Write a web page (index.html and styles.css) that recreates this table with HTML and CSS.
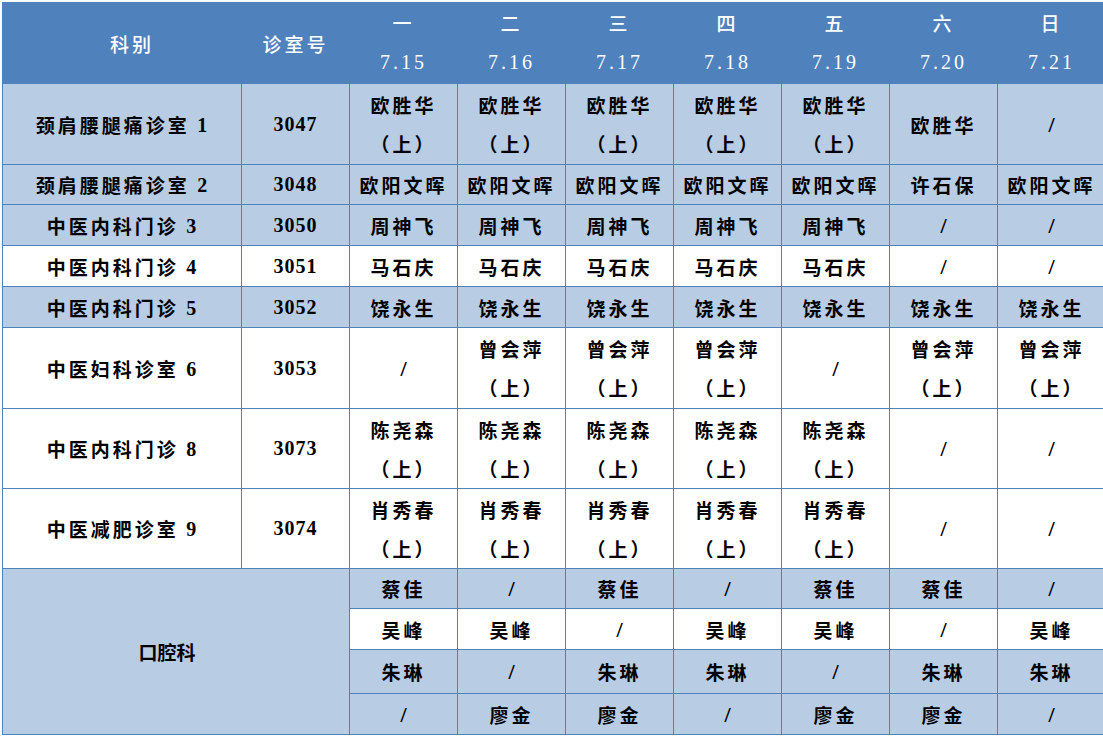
FILE: index.html
```html
<!DOCTYPE html>
<html lang="zh-CN">
<head>
<meta charset="utf-8">
<title>排班表</title>
<link rel="stylesheet" href="styles.css">
</head>
<body>
<table class="sched">
  <colgroup>
    <col class="c-dept"><col class="c-room">
    <col class="c-day"><col class="c-day"><col class="c-day"><col class="c-day"><col class="c-day"><col class="c-day"><col class="c-day">
  </colgroup>
  <thead>
    <tr class="h1">
      <th rowspan="2" class="dept-h">科别</th>
      <th rowspan="2">诊室号</th>
      <th>一</th><th>二</th><th>三</th><th>四</th><th>五</th><th>六</th><th>日</th>
    </tr>
    <tr class="h2">
      <th class="date">7.15</th><th class="date">7.16</th><th class="date">7.17</th><th class="date">7.18</th><th class="date">7.19</th><th class="date">7.20</th><th class="date">7.21</th>
    </tr>
  </thead>
  <tbody>
    <tr class="lt tall">
      <td>颈肩腰腿痛诊室 <span class="num">1</span></td><td class="num">3047</td>
      <td>欧胜华<br>（上）</td><td>欧胜华<br>（上）</td><td>欧胜华<br>（上）</td><td>欧胜华<br>（上）</td><td>欧胜华<br>（上）</td><td>欧胜华</td><td class="sl">/</td>
    </tr>
    <tr class="lt short">
      <td>颈肩腰腿痛诊室 <span class="num">2</span></td><td class="num">3048</td>
      <td>欧阳文晖</td><td>欧阳文晖</td><td>欧阳文晖</td><td>欧阳文晖</td><td>欧阳文晖</td><td>许石保</td><td>欧阳文晖</td>
    </tr>
    <tr class="lt">
      <td>中医内科门诊 <span class="num">3</span></td><td class="num">3050</td>
      <td>周神飞</td><td>周神飞</td><td>周神飞</td><td>周神飞</td><td>周神飞</td><td class="sl">/</td><td class="sl">/</td>
    </tr>
    <tr class="wh">
      <td>中医内科门诊 <span class="num">4</span></td><td class="num">3051</td>
      <td>马石庆</td><td>马石庆</td><td>马石庆</td><td>马石庆</td><td>马石庆</td><td class="sl">/</td><td class="sl">/</td>
    </tr>
    <tr class="lt">
      <td>中医内科门诊 <span class="num">5</span></td><td class="num">3052</td>
      <td>饶永生</td><td>饶永生</td><td>饶永生</td><td>饶永生</td><td>饶永生</td><td>饶永生</td><td>饶永生</td>
    </tr>
    <tr class="wh tall">
      <td>中医妇科诊室 <span class="num">6</span></td><td class="num">3053</td>
      <td class="sl">/</td><td>曾会萍<br>（上）</td><td>曾会萍<br>（上）</td><td>曾会萍<br>（上）</td><td class="sl">/</td><td>曾会萍<br>（上）</td><td>曾会萍<br>（上）</td>
    </tr>
    <tr class="wh tall2">
      <td>中医内科门诊 <span class="num">8</span></td><td class="num">3073</td>
      <td>陈尧森<br>（上）</td><td>陈尧森<br>（上）</td><td>陈尧森<br>（上）</td><td>陈尧森<br>（上）</td><td>陈尧森<br>（上）</td><td class="sl">/</td><td class="sl">/</td>
    </tr>
    <tr class="wh tall2">
      <td>中医减肥诊室 <span class="num">9</span></td><td class="num">3074</td>
      <td>肖秀春<br>（上）</td><td>肖秀春<br>（上）</td><td>肖秀春<br>（上）</td><td>肖秀春<br>（上）</td><td>肖秀春<br>（上）</td><td class="sl">/</td><td class="sl">/</td>
    </tr>
    <tr class="lt short">
      <td class="oral" rowspan="4" colspan="2">口腔科</td>
      <td>蔡佳</td><td class="sl">/</td><td>蔡佳</td><td class="sl">/</td><td>蔡佳</td><td>蔡佳</td><td class="sl">/</td>
    </tr>
    <tr class="wh">
      <td>吴峰</td><td>吴峰</td><td class="sl">/</td><td>吴峰</td><td>吴峰</td><td class="sl">/</td><td>吴峰</td>
    </tr>
    <tr class="lt r44">
      <td>朱琳</td><td class="sl">/</td><td>朱琳</td><td>朱琳</td><td class="sl">/</td><td>朱琳</td><td>朱琳</td>
    </tr>
    <tr class="lt">
      <td class="sl">/</td><td>廖金</td><td>廖金</td><td class="sl">/</td><td>廖金</td><td>廖金</td><td class="sl">/</td>
    </tr>
  </tbody>
</table>
</body>
</html>
```
FILE: styles.css
```css
html, body {
  margin: 0;
  overflow: hidden;
  background: #ffffff;
}
body {
  padding: 2px 0 0 2px;
  font-family: "Noto Sans CJK SC", sans-serif;
}
.sched {
  border-collapse: collapse;
  table-layout: fixed;
  width: 1103px;
}
.c-dept { width: 239px; }
.c-room { width: 108px; }
.c-day { width: 108px; }

.sched th {
  background: #4f81bd;
  color: #ffffff;
  font-weight: 500;
  font-size: 19px;
  letter-spacing: 3px;
  padding: 0;
  border: 1px solid #4f81bd;
  text-align: center;
  vertical-align: middle;
  line-height: 24px;
}
.sched .h1 th { height: 40px; }
.sched .h1 th[rowspan] { padding-top: 2px; }
.sched .h2 th { height: 36px; padding-bottom: 3px; }
.sched th.dept-h { padding-left: 20px; }
.sched th.date {
  font-family: "Liberation Serif", serif;
  font-weight: 400;
  font-size: 20px;
  letter-spacing: 3px;
}

.sched td {
  border: 1px solid #4f81bd;
  padding: 0;
  text-align: center;
  vertical-align: middle;
  color: #000000;
  font-size: 19px;
  font-weight: 600;
  letter-spacing: 3px;
  line-height: 39px;
  height: 40px;
}
.sched tr.short td { height: 39px; }
.sched tr.tall td { height: 80px; }
.sched tr.tall2 td { height: 79px; }
.sched tr.r44 td { height: 43px; }
.lt td { background: #b8cce4; }
.wh td { background: #ffffff; }

.sched .num {
  font-family: "Liberation Serif", serif;
  font-weight: 700;
  font-size: 20px;
  letter-spacing: 1px;
}
.sched span.num { line-height: 1; vertical-align: 1px; }
.sched td.sl {
  font-family: "Liberation Serif", serif;
  font-weight: 700;
  font-size: 22px;
  letter-spacing: 0;
}
.sched td.oral {
  background: #b8cce4;
  letter-spacing: 0;
  padding-right: 18px;
}
```
